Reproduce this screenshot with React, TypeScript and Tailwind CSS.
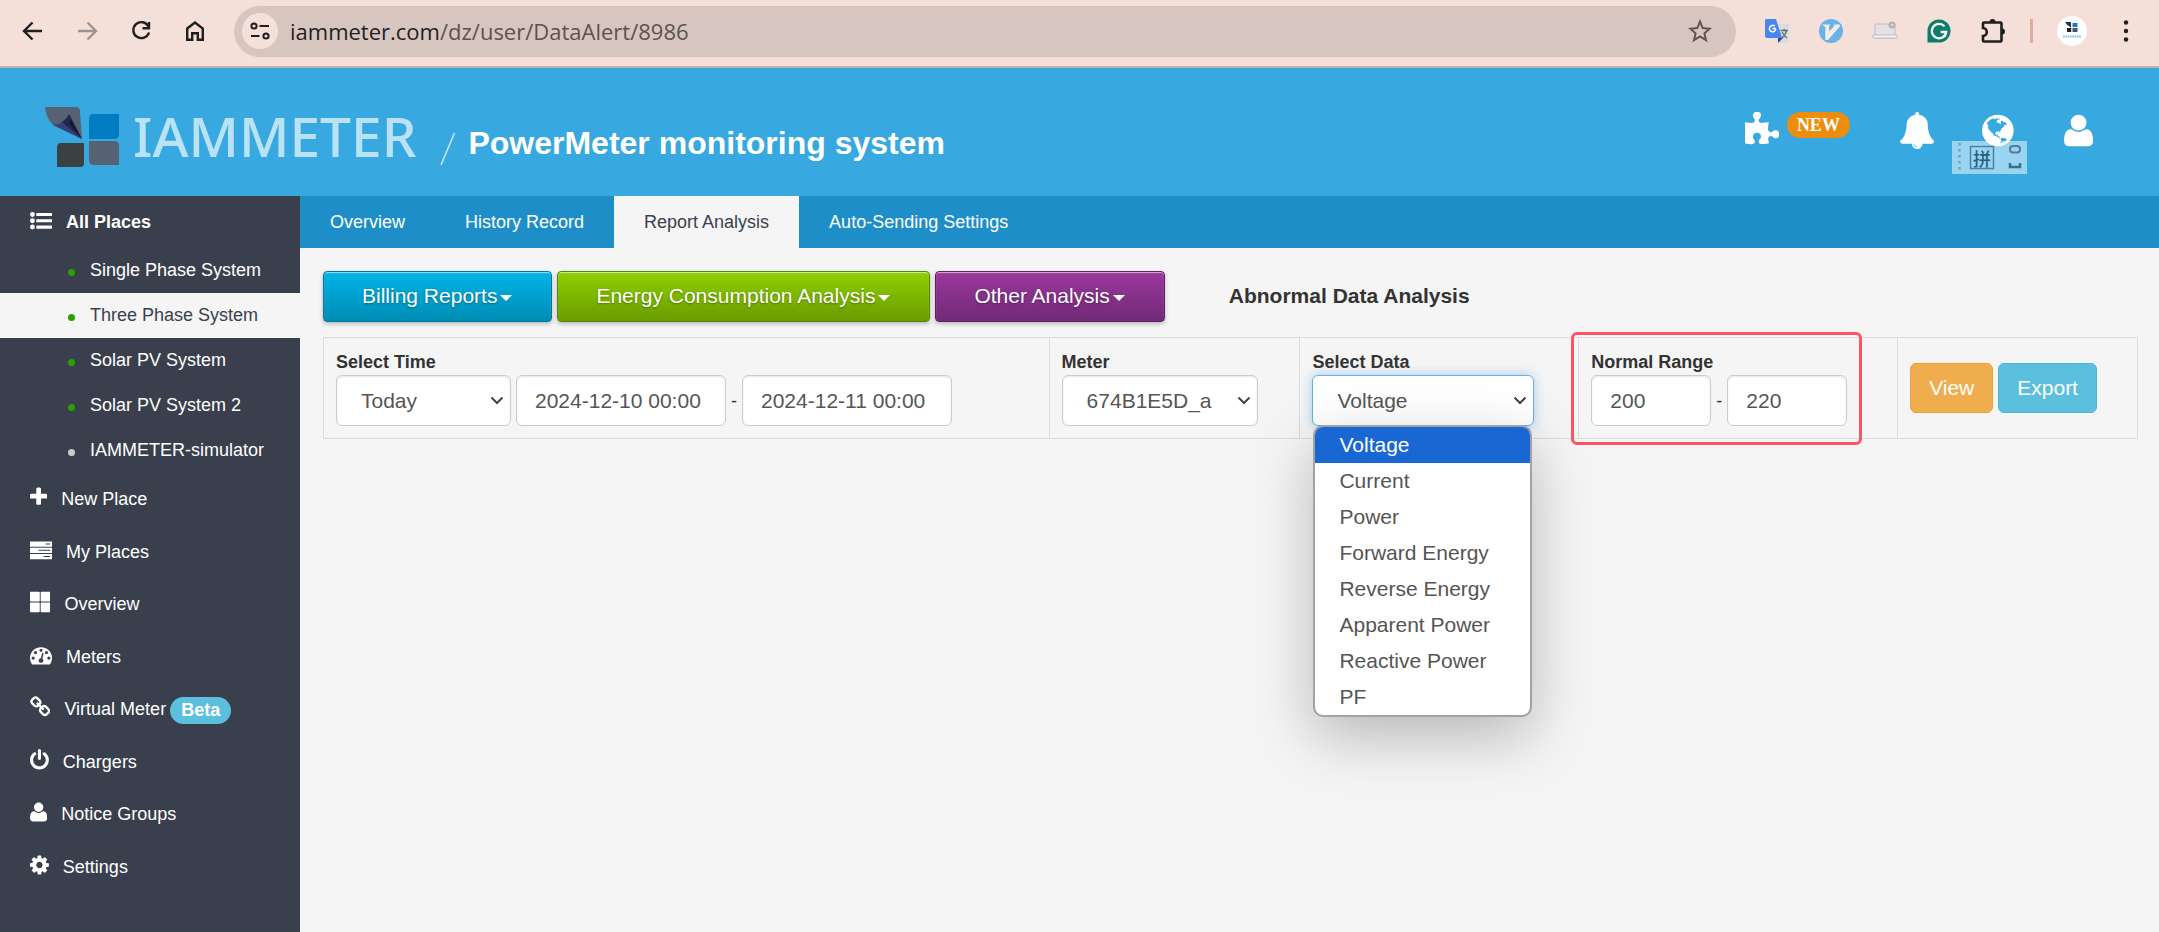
import { useState } from "react";
import type { ReactNode } from "react";

// Font Awesome 4 glyphs, drawn on the 1792 grid. x and w crop the side bearings
const glyphs = {
  user: { x: 192, w: 1408, d: "M1600 1405q0 120-73 189.5t-194 69.5h-874q-121 0-194-69.5t-73-189.5q0-53 3.5-103.5t14-109 26.5-108.5 43-97.5 62-81 85.5-53.5 111.5-20q9 0 42 21.5t74.5 48 108 48 133.5 21.5 133.5-21.5 108-48 74.5-48 42-21.5q61 0 111.5 20t85.5 53.5 62 81 43 97.5 26.5 108.5 14 109 3.5 103.5zm-320-893q0 159-112.5 271.5t-271.5 112.5-271.5-112.5-112.5-271.5 112.5-271.5 271.5-112.5 271.5 112.5 112.5 271.5z" },
  plus: { x: 192, w: 1408, d: "M1600 736v192q0 40-28 68t-68 28h-416v416q0 40-28 68t-68 28h-192q-40 0-68-28t-28-68v-416h-416q-40 0-68-28t-28-68v-192q0-40 28-68t68-28h416v-416q0-40 28-68t68-28h192q40 0 68 28t28 68v416h416q40 0 68 28t28 68z" },
  power: { x: 128, w: 1536, d: "M1664 896q0 156-61 298t-164 245-245 164-298 61-298-61-245-164-164-245-61-298q0-182 80.5-343t226.5-270q43-32 95.5-25t83.5 50q32 42 24.5 94.5t-49.5 84.5q-98 74-151.5 181t-53.5 228q0 104 40.5 198.5t109.5 163.5 163.5 109.5 198.5 40.5 198.5-40.5 163.5-109.5 109.5-163.5 40.5-198.5q0-121-53.5-228t-151.5-181q-42-32-49.5-84.5t24.5-94.5q31-43 84-50t95 25q146 109 226.5 270t80.5 343zm-640-768v640q0 52-38 90t-90 38-90-38-38-90v-640q0-52 38-90t90-38 90 38 38 90z" },
  cog: { x: 128, w: 1536, d: "M1152 896q0-106-75-181t-181-75-181 75-75 181 75 181 181 75 181-75 75-181zm512-109v222q0 12-8 23t-20 13l-185 28q-19 54-39 91 35 50 107 138 10 12 10 25t-9 23q-27 37-99 108t-94 71q-12 0-26-9l-138-108q-44 23-91 38-16 136-29 186-7 28-36 28h-222q-14 0-24.5-8.5t-11.5-21.5l-28-184q-49-16-90-37l-141 107q-10 9-25 9-14 0-25-11-126-114-165-168-7-10-7-23 0-12 8-23 15-21 51-66.5t54-70.5q-27-50-41-99l-183-27q-13-2-21-12.5t-8-23.5v-222q0-12 8-23t19-13l186-28q14-46 39-92-40-57-107-138-10-12-10-24 0-10 9-23 26-36 98.5-107.5t94.5-71.5q13 0 26 10l138 107q44-23 91-38 16-136 29-186 7-28 36-28h222q14 0 24.5 8.5t11.5 21.5l28 184q49 16 90 37l142-107q9-9 24-9 13 0 25 10 129 119 165 170 7 8 7 22 0 12-8 23-15 21-51 66.5t-54 70.5q26 50 41 98l183 28q13 2 21 12.5t8 23.5z" },
  bell: { x: 64, w: 1664, d: "M912 1696q0-16-16-16-59 0-101.5-42.5t-42.5-101.5q0-16-16-16t-16 16q0 73 51.5 124.5t124.5 51.5q16 0 16-16zm816-288q0 52-38 90t-90 38h-448q0 106-75 181t-181 75-181-75-75-181h-448q-52 0-90-38t-38-90q50-42 91-88t85-119.5 74.5-158.5 50-206 19.5-260q0-152 117-282.5t307-158.5q-8-19-8-39 0-40 28-68t68-28 68 28 28 68q0 20-8 39 190 28 307 158.5t117 282.5q0 139 19.5 260t50 206 74.5 158.5 85 119.5 91 88z" },
  link: { x: 64, w: 1664, d: "M1520 1216q0-40-28-68l-208-208q-28-28-68-28-42 0-72 32 3 3 19 18.5t21.5 21.5 15 19 13 25.5 3.5 27.5q0 40-28 68t-68 28q-15 0-27.5-3.5t-25.5-13-19-15-21.5-21.5-18.5-19q-33 31-33 73 0 40 28 68l206 207q27 27 68 27 40 0 68-26l147-146q28-28 28-67zm-703-705q0-40-28-68l-206-207q-28-28-68-28-39 0-68 27l-147 146q-28 28-28 67 0 40 28 68l208 208q27 27 68 27 42 0 72-31-3-3-19-18.5t-21.5-21.5-15-19-13-25.5-3.5-27.5q0-40 28-68t68-28q15 0 27.5 3.5t25.5 13 19 15 21.5 21.5 18.5 19q33-31 33-73zm895 705q0 120-85 203l-147 146q-83 83-203 83-121 0-204-85l-206-207q-83-83-83-203 0-123 88-209l-88-88q-86 88-208 88-120 0-204-84l-208-208q-84-84-84-204t85-203l147-146q83-83 203-83 121 0 204 85l206 207q83 83 83 203 0 123-88 209l88 88q86-88 208-88 120 0 204 84l208 208q84 84 84 204z" },
  tachometer: { x: 0, w: 1792, d: "M384 1152q0-53-37.5-90.5t-90.5-37.5-90.5 37.5-37.5 90.5 37.5 90.5 90.5 37.5 90.5-37.5 37.5-90.5zm192-448q0-53-37.5-90.5t-90.5-37.5-90.5 37.5-37.5 90.5 37.5 90.5 90.5 37.5 90.5-37.5 37.5-90.5zm428 481l101-382q6-26-7.5-48.5t-38.5-29.5-48 6.5-30 39.5l-101 382q-60 5-107 43.5t-63 98.5q-20 77 20 146t117 89 146-20 89-117q16-60-6-117t-72-91zm660-33q0-53-37.5-90.5t-90.5-37.5-90.5 37.5-37.5 90.5 37.5 90.5 90.5 37.5 90.5-37.5 37.5-90.5zm-640-640q0-53-37.5-90.5t-90.5-37.5-90.5 37.5-37.5 90.5 37.5 90.5 90.5 37.5 90.5-37.5 37.5-90.5zm448 192q0-53-37.5-90.5t-90.5-37.5-90.5 37.5-37.5 90.5 37.5 90.5 90.5 37.5 90.5-37.5 37.5-90.5zm320 448q0 261-141 483-19 29-54 29h-1402q-35 0-54-29-141-221-141-483 0-182 71-348t191-286 286-191 348-71 348 71 286 191 191 286 71 348z" },
  list: { x: 0, w: 1792, d: "M400 1472a200 200 0 1 1-400 0 200 200 0 1 1 400 0zM400 960a200 200 0 1 1-400 0 200 200 0 1 1 400 0zM400 448a200 200 0 1 1-400 0 200 200 0 1 1 400 0zM544 1344h1216q32 0 32 32v192q0 32-32 32h-1216q-32 0-32-32v-192q0-32 32-32zM544 832h1216q32 0 32 32v192q0 32-32 32h-1216q-32 0-32-32v-192q0-32 32-32zM544 320h1216q32 0 32 32v192q0 32-32 32h-1216q-32 0-32-32v-192q0-32 32-32z" },
  server: { x: 0, w: 1792, d: "M0 200h1792v430h-1792zM0 710h1792v430h-1792zM0 1220h1792v430h-1792zM1280 370v80h370v-80zM700 880v80h950v-80zM1100 1390v80h550v-80z" },
  large: { x: 64, w: 1664, d: "M134 64h656q70 0 70 70v652q0 70-70 70h-656q-70 0-70-70v-652q0-70 70-70zM1002 64h656q70 0 70 70v652q0 70-70 70h-656q-70 0-70-70v-652q0-70 70-70zM134 936h656q70 0 70 70v652q0 70-70 70h-656q-70 0-70-70v-652q0-70 70-70zM1002 936h656q70 0 70 70v652q0 70-70 70h-656q-70 0-70-70v-652q0-70 70-70z" },
  puzzle: { x: 91, w: 1664, d: "M1755 1083q0 81-44.5 135t-123.5 54q-41 0-77.5-17.5t-59-38-56.5-38-71-17.5q-110 0-110 124 0 39 16 115t15 115v5q-22 0-33 1-34 3-97.5 11.5t-115.5 13.5-98 5q-61 0-103-26.5t-42-83.5q0-37 17.5-71t38-56.5 38-59 17.5-77.5q0-79-54-123.5t-135-44.5q-84 0-143 45.5t-59 127.5q0 43 15 83t33.5 64.5 33.5 53 15 50.5q0 45-46 89-37 35-117 35-95 0-245-24-9-2-27.5-4t-27.5-4l-13-2q-1 0-3-1-2 0-2-1v-1024q2 1 17.5 3.5t34 5 21.5 3.5q150 24 245 24 80 0 117-35 46-44 46-89 0-22-15-50.5t-33.5-53-33.5-64.5-15-83q0-82 59-127.5t144-45.5q80 0 134 44.5t54 123.5q0 41-17.5 77.5t-38 59-38 56.5-17.5 71q0 57 42 83.5t103 26.5q64 0 180-15t163-17v2q-1 2-3.5 17.5t-5 34-3.5 21.5q-24 150-24 245 0 80 35 117 44 46 89 46 22 0 50.5-15t53-33.5 64.5-33.5 83-15q82 0 127.5 59t45.5 143z" },
  globe: { x: 128, w: 1536, d: "M896 128q209 0 385.5 103t279.5 279.5 103 385.5-103 385.5-279.5 279.5-385.5 103-385.5-103-279.5-279.5-103-385.5 103-385.5 279.5-279.5 385.5-103zm274 521q-2 1-9.5 9.5t-13.5 9.5q2 0 4.5-5t5-11 3.5-7q6-7 22-15 14-6 52-12 34-8 51 11-2-2 9.5-13t14.5-12q3-2 15-4.5t15-7.5l2-22q-12 1-17.5-7t-6.5-21q0 2-6 8 0-7-4.5-8t-11.5 1-9 1q-10-3-15-7.5t-8-16.5-4-15q-2-5-9.5-11t-9.5-10q-1-2-2.5-5.5t-3-6.5-4-5.5-5.5-2.5-7 5-7.5 10-4.5 5q-3-2-6-1.5t-4.5 1-4.5 3-5 3.5q-3 2-8.5 3t-8.5 2q15-5-1-11-10-4-16-3 9-4 7.5-12t-8.5-14h5q-1-4-8.5-8.5t-17.5-8.5-13-6q-8-5-34-9.5t-33-.5q-5 6-4.5 10.5t4 14 3.5 12.5q1 6-5.5 13t-6.5 12q0 7 14 15.5t10 21.5q-3 8-16 16t-16 12q-5 8-1.5 18.5t10.5 16.5q2 2 1.5 4t-3.5 4.5-5.5 4-6.5 3.5l-3 2q-11 5-20.5-6t-13.5-26q-7-25-16-30-23-8-29 1-5-13-41-26-25-9-58-4 6-1 0-15-7-15-19-12 3-6 4-17.5t1-13.5q3-13 12-23 1-1 7-8.5t9.5-13.5.5-6q35 4 50-11 5-5 11.5-17t10.5-17q9-6 14-5.5t14.5 5.5 14.5 5q14 1 15.5-11t-7.5-20q12 1 3-17-4-7-8-9-12-4-27 5-8 4 2 8-1-1-9.5 10.5t-16.5 17.5-16-5q-1-1-5.5-13.5t-9.5-13.5q-8 0-16 15 3-8-11-15t-24-8q19-12-8-27-7-4-20.5-5t-19.5 4q-5 7-5.5 11.5t5 8 10.5 5.5 11.5 4 8.5 3q14 10 8 14-2 1-8.5 3.5t-11.5 4.5-6 4q-3 4 0 14t-2 14q-5-5-9-17.5t-7-16.5q7 9-25 6l-10-1q-4 0-16 2t-20.5 1-13.5-8q-4-8 0-20 1-4 4-2-4-3-11-9.5t-10-8.5q-46 15-94 41 6 1 12-1 5-2 13-6.5t10-5.5q34-14 42-7l5-5q14 16 20 25-7-4-30-1-20 6-22 12 7 12 5 18-4-3-11.5-10t-14.5-11-15-5q-16 0-22 1-146 80-235 222 7 7 12 8 4 1 5 9t2.5 11 11.5-3q9 8 3 19 1-1 44 27 19 17 21 21 3 11-10 18-1-2-9-9t-9-4q-3 5 .5 18.5t10.5 12.5q-7 0-9.5 16t-2.5 35.5-1 23.5l2 1q-3 12 5.5 34.5t21.5 19.5q-13 3 20 43 6 8 8 9 3 2 12 7.5t15 10 10 10.5q4 5 10 22.5t14 23.5q-2 6 9.5 20t10.5 23q-1 0-2.5 1t-2.5 1q3 7 15.5 14t15.5 13q1 3 2 10t3 11 8 2q2-20-24-62-15-25-17-29-3-5-5.5-15.5t-4.5-14.5q2 0 6 1.5t8.5 3.5 7.5 4 2 3q-3 7 2 17.5t12 18.5 17 19 12 13q6 6 14 19.5t0 13.5q9 0 20 10.5t17 19.5q5 8 8 26t5 24q2 7 8.5 13.5t12.5 9.5l16 8 13 7q5 2 18.5 10.5t21.5 11.5q10 4 16 4t14.5-2.5 13.5-3.5q15-2 29 15t21 21q36 19 55 11-2 1 .5 7.5t8 15.5 9 14.5 5.5 8.5q5 6 18 15t18 15q6-4 7-9-3 8 7 20t18 10q14-3 14-32-31 15-49-18 0-1-2.5-5.5t-4-8.5-2.5-8.5 0-7.5 5-3q9 0 10-3.5t-2-12.5-4-13q-1-8-11-20t-12-15q-5 9-16 8t-16-9q0 1-1.5 5.5t-1.5 6.5q-13 0-15-1 1-3 2.5-17.5t3.5-22.5q1-4 5.5-12t7.5-14.5 4-12.5-4.5-9.5-17.5-2.5q-19 1-26 20-1 3-3 10.5t-5 11.5-9 7q-7 3-24 2t-24-5q-13-8-22.5-29t-9.5-37q0-10 2.5-26.5t3-25-5.5-24.5q3-2 9-9.5t10-10.5q2-1 4.5-1.5t4.5 0 4-1.5 3-6q-1-1-4-3-3-3-4-3 7 3 28.5-1.5t27.5 1.5q15 11 22-2 0-1-2.5-9.5t-.5-13.5q5 27 29 9 3 3 15.5 5t17.5 5q3 2 7 5.5t5.5 4.5 5-.5 8.5-6.5q10 14 12 24 11 40 19 44 7 3 11 2t4.5-9.5 0-14-1.5-12.5l-1-8v-18l-1-8q-15-3-18.5-12t1.5-18.5 15-18.5q1-1 8-3.5t15.5-6.5 12.5-8q21-19 15-35 7 0 11-9-1 0-5-3t-7.5-5-4.5-2q9-5 2-16 5-3 7.5-11t7.5-10q9 12 21 2 8-8 1-16 5-7 20.5-10.5t18.5-9.5q7 2 8-2t1-12 3-12q4-5 15-9t13-5l17-11q3-4 0-4 18 2 31-11 10-11-6-20 3-6-3-9.5t-15-5.5q3-1 11.5-.5t10.5-1.5q15-10-7-16-17-5-43 12zm-163 877q206-36 351-189-3-3-12.5-4.5t-12.5-3.5q-18-7-24-8 1-7-2.5-13t-8-9-12.5-8-11-7q-2-2-7-6t-7-5.5-7.5-4.5-8.5-2-10 1l-3 1q-3 1-5.5 2.5t-5.5 3-4 3 0 2.5q-21-17-36-22-5-1-11-5.5t-10.5-7-10-1.5-11.5 7q-5 5-6 15t-2 13q-7-5 0-17.5t2-18.5q-3-6-10.5-4.5t-12 4.5-11.5 8.5-9 6.5-8.5 5.500-8.5 7.5q-3 4-6 12t-5 11q-2-4-11.5-6.5t-9.5-5.5q2 10 4 35t5 38q7 31-12 48-27 25-29 40-4 22 12 26 0 7-8 20.5t-7 21.5q0 6 2 16z" },
};

type GlyphName = keyof typeof glyphs;

const Glyph = ({ name, className }: { name: GlyphName; className: string }) => {
  const g = glyphs[name];
  return (
    <svg viewBox={`${g.x} 0 ${g.w} 1792`} className={`w-auto shrink-0 fill-current ${className}`} fillRule="evenodd" aria-hidden="true">
      <path d={g.d} />
    </svg>
  );
};

const places = [
  { name: "Single Phase System", online: true },
  { name: "Three Phase System", online: true },
  { name: "Solar PV System", online: true },
  { name: "Solar PV System 2", online: true },
  { name: "IAMMETER-simulator", online: false },
];

const menu: { name: string; icon: GlyphName; badge?: string }[] = [
  { name: "New Place", icon: "plus" },
  { name: "My Places", icon: "server" },
  { name: "Overview", icon: "large" },
  { name: "Meters", icon: "tachometer" },
  { name: "Virtual Meter", icon: "link", badge: "Beta" },
  { name: "Chargers", icon: "power" },
  { name: "Notice Groups", icon: "user" },
  { name: "Settings", icon: "cog" },
];

const tabs = ["Overview", "History Record", "Report Analysis", "Auto-Sending Settings"];

const reports = [
  { name: "Billing Reports", color: "border-[#0076a3] from-[#00b5e8] to-[#008cb4]" },
  { name: "Energy Consumption Analysis", color: "border-[#538312] from-[#8fd000] to-[#6a9c00]" },
  { name: "Other Analysis", color: "border-[#5c1f60] from-[#9b389f] to-[#722a76]" },
];

const dataTypes = [
  "Voltage",
  "Current",
  "Power",
  "Forward Energy",
  "Reverse Energy",
  "Apparent Power",
  "Reactive Power",
  "PF",
];

// Browser toolbar
const Toolbar = () => (
  <div className="flex h-[68px] items-center border-b-2 border-[#c3b3ae] bg-[#f5e0d9] px-5 pb-1">
    <div className="flex items-center gap-7 text-[#1f1f1f]">
      <button aria-label="Back">
        <svg viewBox="0 0 26 26" className="size-[26px] fill-none stroke-current stroke-[2.4]">
          <path d="M22 13H5M12.5 4.500L4 13l8.500 8.500" />
        </svg>
      </button>
      <button aria-label="Forward" className="text-[#a09290]">
        <svg viewBox="0 0 26 26" className="size-[26px] fill-none stroke-current stroke-[2.4]">
          <path d="M4 13h17M13.500 4.500L22 13l-8.500 8.500" />
        </svg>
      </button>
      <button aria-label="Reload">
        <svg viewBox="0 0 26 26" className="size-[26px] fill-none stroke-current stroke-[2.4]">
          <path d="M20.500 8.500A8 8 0 1 0 21 14.500M21 4v6.200h-6.500" />
        </svg>
      </button>
      <button aria-label="Home">
        <svg viewBox="0 0 26 26" className="size-[26px] fill-none stroke-current stroke-[2.4]">
          <path d="M5.200 10.500L13 4.500l7.800 6v11.300h-5v-6.600h-5.600v6.600h-5z" />
        </svg>
      </button>
    </div>
    <div className="ml-[26px] flex h-[51px] flex-1 items-center rounded-full bg-[#d7c6bf] pr-6 pl-2">
      <button aria-label="Site information" className="flex size-9 items-center justify-center rounded-full bg-[#f5e0d9]">
        <svg viewBox="0 0 22 22" className="size-[22px] fill-none stroke-[#1f1f1f] stroke-2">
          <circle cx="5" cy="6" r="2.600" />
          <path d="M10.500 6H20M2 16h8.500" />
          <circle cx="17" cy="16" r="2.600" />
        </svg>
      </button>
      <div className="ml-3 flex-1 font-['Open_Sans','Noto_Sans',sans-serif] text-[22px] leading-7 text-[#5c5250]">
        <span className="text-[#1f1f1f]">iammeter.com</span>/dz/user/DataAlert/8986
      </div>
      <button aria-label="Bookmark">
        <svg viewBox="0 0 24 24" className="size-6 fill-none stroke-[#5c5553] stroke-2">
          <path d="M12 2.600l2.700 6.500 7 .6-5.300 4.600 1.600 6.900-6-3.700-6 3.700 1.600-6.900-5.300-4.600 7-.6z" />
        </svg>
      </button>
    </div>
    <div className="ml-7 flex items-center gap-7">
      <svg viewBox="0 0 26 26" className="size-[26px]">
        <path d="M10 6h14a1 1 0 0 1 1 1v17a1 1 0 0 1-1 1h-9z" fill="#dcdcdc" />
        <path d="M14 20h5l-5 5z" fill="#2c46b0" />
        <path d="M2 1h10l6 19H3a2 2 0 0 1-2-2V2a1 1 0 0 1 1-1z" fill="#4a86f0" />
        <path d="M11.800 10.600H8.500M10.800 8.200a3.200 3.200 0 1 0 1 2.800" stroke="#fff" strokeWidth="1.500" fill="none" />
        <path d="M16.500 12.500H24M20.200 11v1.500M22.500 12.500q-1 5-5 7.500M18 14q2 4 5 6" stroke="#607478" strokeWidth="1.400" fill="none" />
      </svg>
      <svg viewBox="0 0 26 26" className="size-[26px]">
        <circle cx="13" cy="13" r="12" fill="#69b3e4" />
        <path d="M4.500 6.500h8l-1.300 1.300v5.700l5.200-5.700-.8-1.300h6.200v2L10 22H7.300V8.500H6z" fill="#f6ece8" />
      </svg>
      <svg viewBox="0 0 26 26" className="size-[26px]">
        <rect x="3" y="6" width="20" height="14" rx="1" fill="#e2e2e2" stroke="#bcbcbc" />
        <path d="M1 17h24v3H1z" fill="#f1f1f1" stroke="#b5b5b5" strokeWidth=".8" />
        <circle cx="20" cy="7" r="3.500" fill="#b3b1b1" />
        <circle cx="20" cy="7" r="1.300" fill="#ddd" />
      </svg>
      <svg viewBox="0 0 26 26" className="size-[26px]">
        <path d="M13 1.500a11.500 11.500 0 1 1 0 23H1.500V13A11.500 11.500 0 0 1 13 1.500z" fill="#0b7d69" />
        <path d="M18.500 8.300A7.200 7.200 0 1 0 20.200 14h-5.500M20.200 14l-1.500 5" stroke="#fff" strokeWidth="2.300" fill="none" />
      </svg>
      <button aria-label="Extensions">
        <svg viewBox="0 0 26 26" className="size-[26px]">
          <path d="M4 4.500h16.500a1 1 0 0 1 1 1v17a1 1 0 0 1-1 1H4a1 1 0 0 1-1-1v-4.500c5 0 5-8 0-8V5.500a1 1 0 0 1 1-1z" fill="none" stroke="#1f1f1f" strokeWidth="2.600" />
          <path d="M9.500 4a3 3 0 0 1 6 0zM22 10.500a3 3 0 0 1 0 6z" fill="#1f1f1f" />
        </svg>
      </button>
    </div>
    <div className="ml-6 h-6 w-[3px] bg-[#e3ab9b]" />
    <button aria-label="Profile" className="ml-6 size-[30px] rounded-full bg-white">
      <svg viewBox="0 0 30 30" className="size-[30px]">
        <path d="M8 6h6v5.500q-4-1.500-6-5.500z" fill="#27304c" />
        <path d="M15.500 7h5v4h-5z" fill="#0a7fc9" />
        <path d="M10 12h4.200v4H10z" fill="#222" />
        <path d="M15.500 12h5v4h-5z" fill="#4a5366" />
        <path d="M6 20.500h18" stroke="#8dc5e2" strokeWidth="2" strokeDasharray="1.800 .5" />
      </svg>
    </button>
    <button aria-label="Menu" className="ml-[26px]">
      <svg viewBox="0 0 26 26" className="size-[26px] fill-[#1f1f1f]">
        <circle cx="13" cy="4.500" r="2.200" />
        <circle cx="13" cy="13" r="2.200" />
        <circle cx="13" cy="21.500" r="2.200" />
      </svg>
    </button>
  </div>
);

const Header = () => (
  <header className="relative flex h-32 items-center justify-between bg-[#37a8e0] pr-[66px] pl-[45px] text-white">
    <div className="flex items-center">
      <a href="#home" className="flex items-center gap-[14px]">
        <svg viewBox="0 0 74 60" className="mt-[10px] h-[60px] w-[74px]" aria-hidden="true">
          <path d="M0 0h31q4 0 4 5l2 27-29-14Q1 11 0 0z" fill="#566273" />
          <path d="M8 18q11-1 16-11l13 25z" fill="#35427a" />
          <path d="M24 7l13 25L17 15q5-3 7-8z" fill="#23284d" />
          <path d="M26 13l10 18-12-15z" fill="#15182c" />
          <path d="M48 7h26v20q0 5-5 5H44V12q0-5 4-5z" fill="#007cc3" />
          <path d="M16 36h23v20q0 4-4 4H12V41q0-5 4-5z" fill="#3b4041" />
          <path d="M44 34h25q5 0 5 5v19H49q-5 0-5-5z" fill="#566273" />
        </svg>
        <span className="mt-2 font-['Noto_Sans',sans-serif] text-[55px] leading-[60px] font-medium text-[#b9e2f4]">IAMMETER</span>
      </a>
      <svg viewBox="0 0 16 34" className="mt-[34px] ml-6 h-[34px] w-4" aria-hidden="true">
        <path d="M1 33L14.500 1" stroke="#c4e6f6" strokeWidth="1.600" />
      </svg>
      <h1 className="mt-[22px] ml-3 text-[32px] leading-9 font-bold">PowerMeter monitoring system</h1>
    </div>
    <div className="flex items-center pb-1">
      <button aria-label="Integrations" className="flex items-start gap-2">
        <Glyph name="puzzle" className="h-[37px]" />
        <span className="rounded-full bg-[#ee8d0c] px-[10px] font-['Liberation_Serif',serif] text-lg leading-[26px] font-bold">NEW</span>
      </button>
      <button aria-label="Alerts" className="ml-[50px]">
        <Glyph name="bell" className="h-[37px]" />
      </button>
      <button aria-label="Language" className="ml-12">
        <Glyph name="globe" className="h-[37px]" />
      </button>
      <button aria-label="Account" className="ml-[50px]">
        <Glyph name="user" className="h-[37px]" />
      </button>
    </div>
    {/* Input method badge floating over the header */}
    <div className="absolute top-[73px] right-[132px] flex h-[33px] w-[75px] items-center bg-white/50 text-[#27607f]">
      <svg viewBox="0 0 75 33" className="absolute inset-0 size-full" aria-hidden="true">
        <path d="M7.500 2v30" stroke="#6aa5c2" strokeWidth="2.500" strokeDasharray="2.500 3.500" />
        <rect x="18.500" y="5.500" width="23" height="22" fill="none" stroke="#4583a4" strokeWidth="1.500" />
        <rect x="58" y="5" width="10" height="6.500" rx="3" fill="none" stroke="#4f7f9b" strokeWidth="2" />
        <path d="M58 22v4h10v-4" fill="none" stroke="#3b6f8e" strokeWidth="2.500" />
      </svg>
      <span className="ml-[21px] font-['Noto_Sans_CJK_SC',sans-serif] text-lg leading-5 font-medium">拼</span>
    </div>
  </header>
);

const Sidebar = () => (
  <nav className="w-[300px] shrink-0 bg-[#3a3f4d] text-lg text-white">
    <a href="#places" className="flex h-[52px] items-center gap-[14px] pl-[30px] font-bold">
      <Glyph name="list" className="mb-1 h-[22px]" />
      All Places
    </a>
    <ul>
      {places.map((place) => (
        <li key={place.name}>
          <a
            href="#place"
            className={`flex h-[45px] items-center gap-[15px] pb-0.5 pl-[68px] ${
              place.name === "Three Phase System" ? "bg-[#f5f5f5] text-[#3a3f4d]" : ""
            }`}
          >
            <span className={`mt-1.5 size-[7px] rounded-full ${place.online ? "bg-[#2ca002]" : "bg-[#cccccc]"}`} />
            {place.name}
          </a>
        </li>
      ))}
    </ul>
    <ul className="flex h-[420px] flex-col">
      {menu.map((item) => (
        <li key={item.name} className="flex-1">
          <a href="#menu" className="flex h-full items-center pl-[30px]">
            <Glyph name={item.icon} className="mr-[14px] mb-1 h-[22px]" />
            {item.name}
            {item.badge && (
              <span className="mt-0.5 ml-1 rounded-full bg-[#5bc0de] px-[11px] leading-[27px] font-bold">{item.badge}</span>
            )}
          </a>
        </li>
      ))}
    </ul>
  </nav>
);

const Chevron = () => (
  <svg viewBox="0 0 14 9" className="pointer-events-none absolute top-[21px] right-[7px] h-[9px] w-[14px] fill-none stroke-[#444] stroke-2" aria-hidden="true">
    <path d="M1.500 1.500L7 7l5.500-5.500" />
  </svg>
);

const field = "h-[51px] rounded-md border border-[#ccc] bg-white text-[21px] text-[#555] shadow-[inset_0_1px_2px_rgba(0,0,0,0.1)] outline-none";

const Cell = ({ label, id, children }: { label: string; id: string; children: ReactNode }) => (
  <div className="border-r border-[#ddd] px-3 pt-[11px] pb-3">
    <label htmlFor={id} className="block text-lg leading-[26px] font-bold text-[#333]">
      {label}
    </label>
    {children}
  </div>
);

const Filters = () => {
  const [dataType, setDataType] = useState("Voltage");
  const [open, setOpen] = useState(true);

  return (
    <form
      onSubmit={(e) => e.preventDefault()}
      className="mt-[15px] grid grid-cols-[726fr_251fr_279fr_319fr_240fr] border border-r-0 border-[#ddd]"
    >
      <Cell label="Select Time" id="period">
        <div className="flex items-center gap-[5px]">
          <div className="relative">
            <select id="period" className={`${field} w-[175px] appearance-none pl-6`}>
              <option>Today</option>
            </select>
            <Chevron />
          </div>
          <input aria-label="From" type="text" defaultValue="2024-12-10 00:00" className={`${field} w-[210px] px-[18px]`} />
          <span className="text-lg text-[#333]">-</span>
          <input aria-label="To" type="text" defaultValue="2024-12-11 00:00" className={`${field} w-[210px] px-[18px]`} />
        </div>
      </Cell>
      <Cell label="Meter" id="meter">
        <div className="relative w-[196px]">
          <select id="meter" className={`${field} w-full appearance-none pl-6`}>
            <option>674B1E5D_a</option>
          </select>
          <Chevron />
        </div>
      </Cell>
      <Cell label="Select Data" id="data">
        <div className="relative w-[222px]">
          <select
            id="data"
            value={dataType}
            onChange={(e) => setDataType(e.target.value)}
            onClick={() => setOpen(!open)}
            className="h-[51px] w-full appearance-none rounded-md border border-[#66afe9] bg-white pl-6 text-[21px] text-[#555] shadow-[0_0_12px_rgba(102,175,233,0.6)] outline-none"
          >
            {dataTypes.map((type) => (
              <option key={type}>{type}</option>
            ))}
          </select>
          <Chevron />
          {open && (
            <ul
              role="listbox"
              className="absolute top-[50px] right-[2px] left-px z-10 overflow-hidden rounded-[10px] border-2 border-[#a3a3a3] bg-white text-[21px] leading-9 text-[#555] shadow-[0_20px_60px_rgba(0,0,0,0.25)]"
            >
              {dataTypes.map((type) => (
                <li
                  key={type}
                  role="option"
                  aria-selected={type === dataType}
                  onClick={() => {
                    setDataType(type);
                    setOpen(false);
                  }}
                  className={`pl-6 ${type === dataType ? "bg-[#1967d2] text-white" : ""}`}
                >
                  {type}
                </li>
              ))}
            </ul>
          )}
        </div>
      </Cell>
      <div className="relative">
        <Cell label="Normal Range" id="range-min">
          <div className="flex items-center gap-[5px]">
            <input id="range-min" type="text" defaultValue="200" className={`${field} w-[120px] px-[18px]`} />
            <span className="text-lg text-[#333]">-</span>
            <input aria-label="Maximum" type="text" defaultValue="220" className={`${field} w-[120px] px-[18px]`} />
          </div>
        </Cell>
        {/* Highlight around the range fields */}
        <div className="pointer-events-none absolute -top-[6px] -left-[8px] h-[113px] w-[291px] rounded-md border-[3px] border-[#ff5468]" />
      </div>
      <div className="flex items-center gap-[5px] border-r border-[#ddd] pl-3 text-[21px] text-white">
        <button className="h-[50px] rounded-md border border-[#eea236] bg-[#f0ad4e] px-[18px]">View</button>
        <button className="h-[50px] rounded-md border border-[#46b8da] bg-[#5bc0de] px-[18px]">Export</button>
      </div>
    </form>
  );
};

const App = () => {
  return (
    <div className="flex min-h-screen flex-col bg-[#f5f5f5] font-['Liberation_Sans',Arial,sans-serif]">
      <Toolbar />
      <Header />
      <div className="flex flex-1">
        <Sidebar />
        <div className="min-w-0 flex-1">
          <nav className="flex h-[52px] bg-[#1e8ec8] text-lg text-white">
            {tabs.map((tab) => (
              <a
                key={tab}
                href="#tab"
                className={`flex items-center px-[30px] ${tab === "Report Analysis" ? "bg-[#f5f5f5] text-[#3a3f4d]" : ""}`}
              >
                {tab}
              </a>
            ))}
          </nav>
          <main className="pt-[23px] pr-[21px] pl-[23px]">
            <div className="flex items-center gap-[5px]">
              {reports.map((report) => (
                <button
                  key={report.name}
                  className={`flex h-[51px] items-center gap-[3px] rounded border bg-linear-to-b pr-[39px] pb-0.5 pl-[38px] text-[21px] text-white shadow-[0_2px_4px_rgba(0,0,0,0.25),inset_0_1px_1px_rgba(255,255,255,0.6)] text-shadow-[0_1px_2px_rgba(0,0,0,0.35)] ${report.color}`}
                >
                  {report.name}
                  <span className="mt-1 border-x-6 border-t-6 border-x-transparent border-t-white" />
                </button>
              ))}
              <h2 className="ml-[59px] pb-0.5 text-[21px] font-bold text-[#333]">Abnormal Data Analysis</h2>
            </div>
            <Filters />
          </main>
        </div>
      </div>
    </div>
  );
};

export default App;
